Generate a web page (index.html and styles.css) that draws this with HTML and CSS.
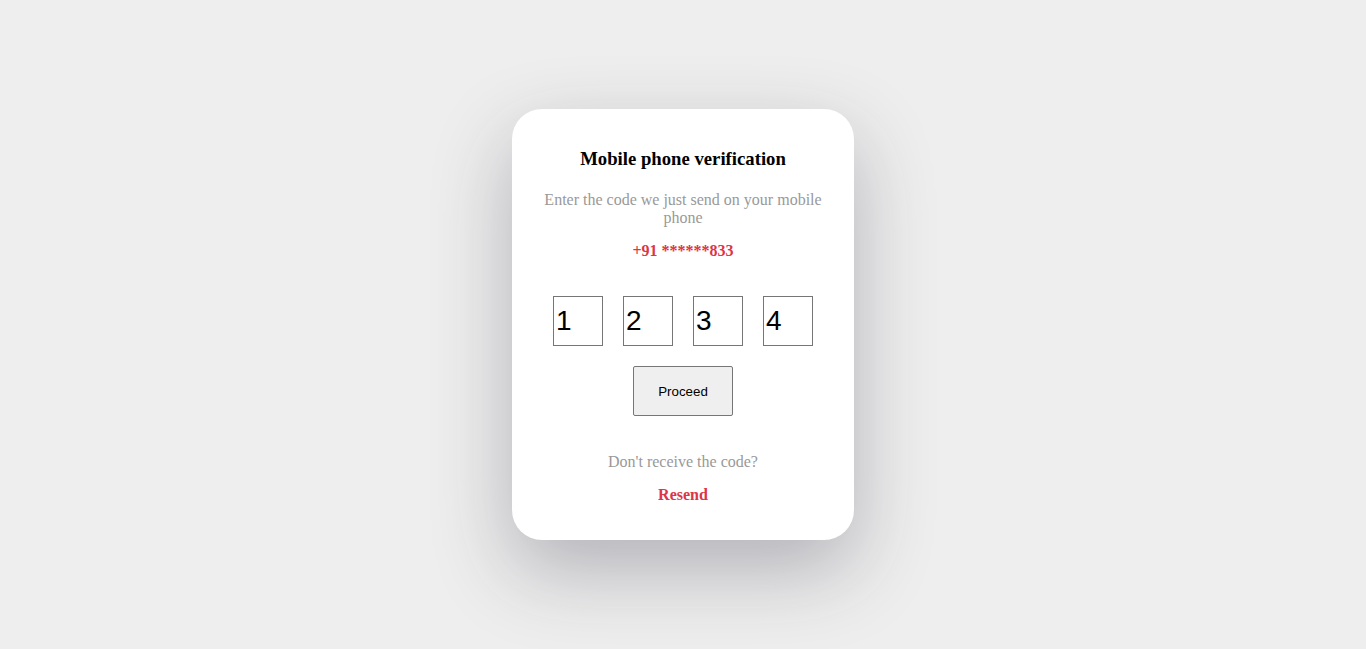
FILE: index.html
```html
<!DOCTYPE html>
<html lang="en">
<head>
  <meta charset="UTF-8">
  <meta name="viewport" content="width=device-width, initial-scale=1.0">
  <title>Mobile phone verification</title>
  <link rel="stylesheet" href="styles.css">
</head>
<body>

  <div class="card">
    <h3 class="titulo">Mobile phone verification</h3>
    <p class="texto">Enter the code we just send on your mobile phone</p>
    <div class="telefone">+91 ******833</div>

    <div class="codigo">
      <input type="text" maxlength="1" value="1">
      <input type="text" maxlength="1" value="2">
      <input type="text" maxlength="1" value="3">
      <input type="text" maxlength="1" value="4">
    </div>

    <button class="btn-proceed">Proceed</button>

    <p class="texto reenviar">Don't receive the code?</p>
    <div class="telefone link">Resend</div>
  </div>

</body>
</html>
```

FILE: styles.css
```css
body {
  margin: 0;
  height: 100vh;
  background: #eeeeee;
  font-family: "Liberation Serif", "Times New Roman", serif;
  display: flex;
  align-items: center;
  justify-content: center;
}

.card {
  width: 302px;
  background: white;
  border-radius: 30px;
  padding: 39px 20px 36px;
  text-align: center;
  box-shadow: 0 30px 80px rgba(40, 40, 60, 0.3);
}

.titulo {
  margin: 0;
  font-size: 18.72px;
  color: black;
}

.texto {
  margin: 21px 0 0;
  font-size: 16px;
  color: #999999;
}

.telefone {
  margin-top: 15px;
  font-size: 16px;
  font-weight: bold;
  color: #dc3545;
}

.codigo {
  margin-top: 36px;
  display: flex;
  justify-content: center;
  gap: 20px;
}

.codigo input {
  width: 50px;
  height: 50px;
  box-sizing: border-box;
  border: 1px solid #767676;
  padding: 1px 2px;
  font-family: "Liberation Sans", Arial, sans-serif;
  font-size: 28px;
  color: black;
  outline: none;
}

.btn-proceed {
  margin-top: 20px;
  width: 100px;
  height: 50px;
  background: #efefef;
  border: 1px solid #767676;
  border-radius: 2px;
  font-family: "Liberation Sans", Arial, sans-serif;
  font-size: 13.33px;
  color: black;
  cursor: pointer;
}

.reenviar {
  margin-top: 37px;
}

.link {
  margin-top: 15px;
  cursor: pointer;
}
```
